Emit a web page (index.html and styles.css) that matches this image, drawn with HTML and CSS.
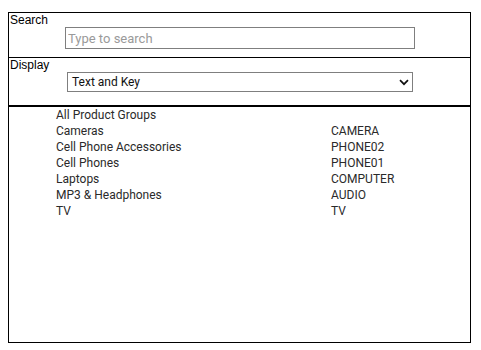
FILE: index.html
```html
<!DOCTYPE html>
<html lang="en">
<head>
    <meta charset="UTF-8">
    <title>Product Groups</title>
    <link rel="stylesheet" href="styles.css">
</head>
<body>
    <div class="panel">
        <div class="field search-field">
            <label class="field-label" for="search">Search</label>
            <input type="text" id="search" class="search-input" placeholder="Type to search">
        </div>

        <div class="field display-field">
            <div class="field-label">Display</div>
            <div class="select">
                <span>Text and Key</span>
                <svg class="chevron" width="10" height="7" viewBox="0 0 10 7">
                    <path d="M1 1.2 L5 5.2 L9 1.2" fill="none" stroke="#111" stroke-width="1.7"/>
                </svg>
            </div>
        </div>

        <div class="list">
            <div class="row"><span>All Product Groups</span><span></span></div>
            <div class="row"><span>Cameras</span><span>CAMERA</span></div>
            <div class="row"><span>Cell Phone Accessories</span><span>PHONE02</span></div>
            <div class="row"><span>Cell Phones</span><span>PHONE01</span></div>
            <div class="row"><span>Laptops</span><span>COMPUTER</span></div>
            <div class="row"><span>MP3 &amp; Headphones</span><span>AUDIO</span></div>
            <div class="row"><span>TV</span><span>TV</span></div>
        </div>
    </div>
</body>
</html>
```

FILE: styles.css
```css
body {
    margin: 12px 8px;
    background-color: #fff;
    font-family: Roboto, "Liberation Sans", sans-serif;
}
.panel {
    width: 461px;
    height: 329px;
    border: 1px solid #000;
    display: flex;
    flex-direction: column;
}
.field {
    display: flex;
    flex-direction: column;
    align-items: flex-start;
}
.search-field {
    padding-bottom: 8px;
    border-bottom: 1px solid #000;
}
.display-field {
    padding-bottom: 13px;
}
.field-label {
    font-family: "Liberation Sans", Arial, sans-serif;
    font-size: 12px;
    line-height: 14px;
    padding-left: 1px;
    color: #000;
}
.search-input {
    box-sizing: border-box;
    width: 350px;
    height: 22px;
    margin: 0 0 0 56px;
    padding: 0 2px;
    border: 1px solid #7f7f7f;
    font-family: Roboto, sans-serif;
    font-size: 13px;
    color: #222;
    outline: none;
}
.search-input::placeholder {
    color: #9a9a9a;
}
.select {
    box-sizing: border-box;
    width: 346px;
    height: 20px;
    margin-left: 58px;
    padding: 0 3px 0 4px;
    border: 1px solid #7f7f7f;
    display: flex;
    align-items: center;
    justify-content: space-between;
    font-size: 12px;
    color: #111;
}
.list {
    flex: 1;
    border-top: 2px solid #000;
    padding-left: 47px;
}
.row {
    display: grid;
    grid-template-columns: 275px 1fr;
    font-size: 12px;
    line-height: 16px;
    color: #2a2a2a;
}
```
